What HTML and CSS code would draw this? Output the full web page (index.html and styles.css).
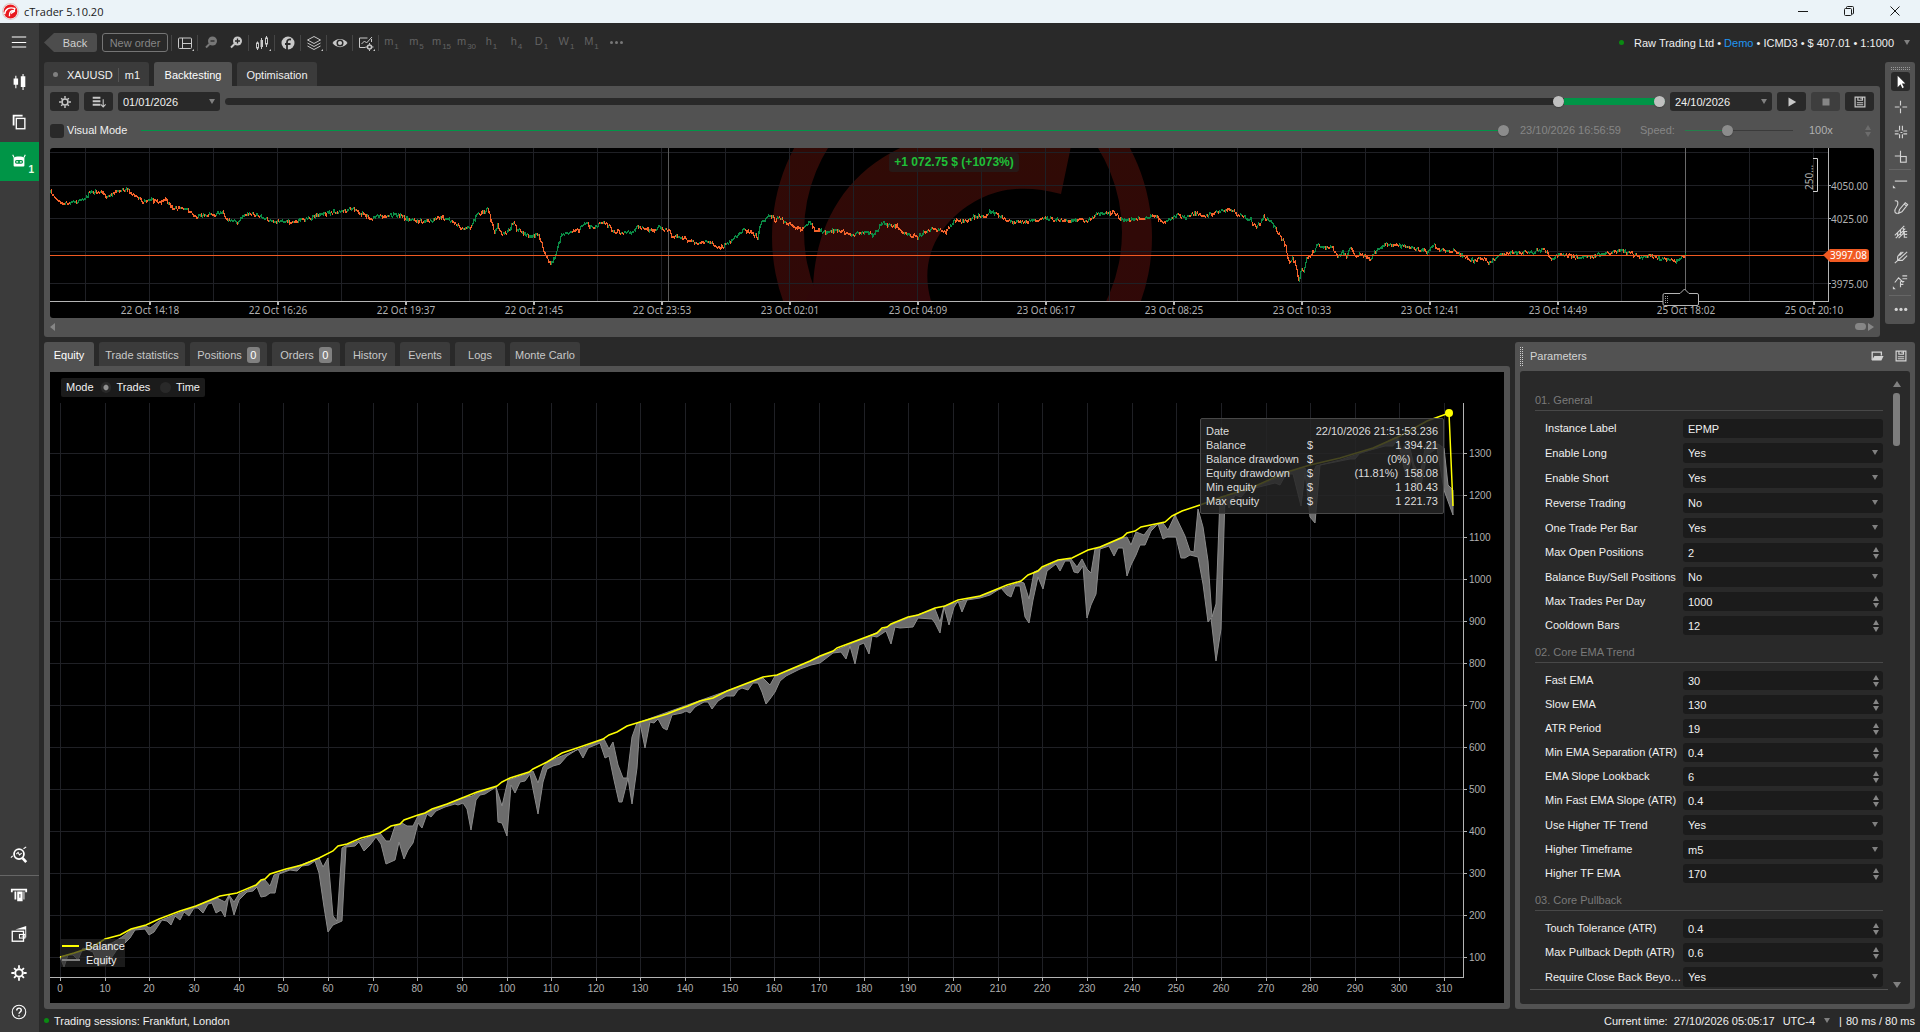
FILE: index.html
```html
<!DOCTYPE html>
<html lang="en">
<head>
<meta charset="utf-8">
<title>cTrader 5.10.20</title>
<link rel="stylesheet" href="styles.css">
</head>
<body>
<header class="titlebar">
  <svg class="logo" viewBox="0 0 16 16"><circle cx="8" cy="8" r="7.500" fill="#fff" stroke="#d9c9c9"/><circle cx="8" cy="8" r="6.500" fill="#e8191f"/><path d="M2.500 10.500C3 5.500 7 3.500 12 5.200L11.500 7.500C8.500 6.600 6.500 8.500 7 12.500" fill="none" stroke="#fff" stroke-width="1.300"/><path d="M8.500 10.500a2.500 2.500 0 0 1 4-2.500" fill="#fff"/></svg>
  <span class="title">cTrader 5.10.20</span>
  <button class="win" aria-label="Minimize"><svg viewBox="0 0 12 12"><path d="M1 6.500H11"/></svg></button>
  <button class="win" aria-label="Restore"><svg viewBox="0 0 12 12"><rect x="1.500" y="3.500" width="7" height="7" rx="1"/><path d="M3.500 3V2.500a1 1 0 0 1 1-1H9.500a1 1 0 0 1 1 1V8a1 1 0 0 1-1 1H9"/></svg></button>
  <button class="win" aria-label="Close"><svg viewBox="0 0 12 12"><path d="M1.500 1.500L10.500 10.500M10.500 1.500L1.500 10.500"/></svg></button>
</header>
<div class="app">
  <nav class="side">
    <button aria-label="Menu"><svg viewBox="0 0 20 20"><path d="M2 4.500H18M2 10.500H18M2 15.500H18"/></svg></button>
    <button aria-label="Trade"><svg viewBox="0 0 20 20"><path d="M6.500 3V17M14.500 1V19"/><path class="f" d="M4 6h5v7H4zM12 3.500h5v12h-5z"/></svg></button>
    <button aria-label="Copy"><svg viewBox="0 0 20 20"><path d="M4 14V3H14" stroke-width="2"/><rect x="7" y="6" width="9.500" height="11.500" stroke-width="1.500"/></svg></button>
    <button class="on" aria-label="Algo"><svg viewBox="0 0 20 20"><path class="f" d="M4 6.500C6 4.500 14 4.500 16 6.500V15a1 1 0 0 1-1 1H5a1 1 0 0 1-1-1z"/><path d="M4.500 6L3 3M15.500 6L17 3"/><rect x="5.500" y="9" width="9" height="4" rx="2" fill="#009547" stroke="none"/><path d="M7 11h2M11 11h2"/></svg><small>1</small></button>
    <span class="grow"></span>
    <button aria-label="Analyze"><svg viewBox="0 0 20 20"><circle cx="10" cy="9" r="5.500" stroke-width="2"/><path d="M14 13.500L18 18" stroke-width="3"/><path d="M7 9l2-2 1.500 3L13 8M1 13l2-2M15 3l3-2" stroke-width="1.200"/></svg></button>
    <hr>
    <button aria-label="Deposit"><svg viewBox="0 0 20 20"><path d="M2 7V4H18V7" stroke-width="2"/><path class="f" d="M5 6h2v9H5zM8 6h6v11H8zM15 6h1v9h-1z"/><path d="M10.500 9h1v4h-1z" fill="#3b3b3b" stroke="none"/></svg></button>
    <button aria-label="Wallet"><svg viewBox="0 0 20 20"><rect x="2.500" y="7" width="12.500" height="11" stroke-width="1.500"/><path class="f" d="M6 5L18 1V14h-1V5z"/><rect x="10.500" y="10.500" width="6" height="4"/><path d="M13 12.500h1"/></svg></button>
    <button aria-label="Settings"><svg viewBox="0 0 20 20"><use href="#gear"/></svg></button>
    <button aria-label="Help"><svg viewBox="0 0 20 20"><circle cx="10" cy="10" r="7.500"/><path d="M7.500 8.200C7.500 4.800 12.500 5 12.500 8c0 2-2.500 2-2.500 4M10 13.500v1.500" stroke-width="1.600"/></svg></button>
  </nav>
  <main class="main">
    <div class="toolbar">
      <button class="back">Back</button>
      <button class="neworder">New order</button>
      <button class="ic drop" aria-label="Layout"><svg viewBox="0 0 16 16"><rect x="1.500" y="3" width="13" height="10.500" rx="1"/><path d="M5.500 3v10.500M5.500 8.500h9"/></svg></button>
      <button class="ic dim" aria-label="Zoom out"><svg viewBox="0 0 16 16"><circle class="f" cx="9.500" cy="6" r="4.500"/><path d="M6.500 9L3 12.500" stroke-width="2"/><path d="M7.500 6h4" stroke="#292929" stroke-width="1.300"/></svg></button>
      <button class="ic nosep" aria-label="Zoom in"><svg viewBox="0 0 16 16"><circle class="f" cx="9.500" cy="6" r="4.500"/><path d="M6.500 9L3 12.500" stroke-width="2"/><path d="M7 6h5M9.500 3.500v5" stroke="#292929" stroke-width="1.300"/></svg></button>
      <button class="ic drop" aria-label="Chart type"><svg viewBox="0 0 16 16"><path d="M3.500 6.500v1.500M3.500 13v2M7.500 3v11M12.500 1v2M12.500 9v3"/><path class="f" d="M6.500 5h2.500v7h-2.500z"/><rect x="2.500" y="8" width="2" height="5"/><rect x="11.500" y="3" width="2" height="6"/></svg></button>
      <button class="ic" aria-label="Indicators"><svg viewBox="0 0 16 16"><circle class="f" cx="8" cy="8" r="6.500"/><path d="M7 15V7.500C7 5 8.500 4 11 4.500M5 9H10.500" stroke="#292929" stroke-width="1.800"/></svg></button>
      <button class="ic drop" aria-label="Objects"><svg viewBox="0 0 16 16"><path d="M8 1.500L14.500 5 8 8.500 1.500 5zM1.500 8L8 11.500 14.500 8M1.500 11L8 14.500 14.500 11"/></svg></button>
      <button class="ic" aria-label="Viewing options"><svg viewBox="0 0 16 16"><path class="f" d="M.5 8C4 2.500 12 2.500 15.500 8 12 13.500 4 13.500.5 8z"/><circle cx="8" cy="8" r="2.800" fill="#ccc" stroke="#292929" stroke-width="1.500"/></svg></button>
      <button class="ic drop" aria-label="Chart settings"><svg viewBox="0 0 16 16"><path d="M7.500 12.500H1.500V3h8M3.500 9l3-3 2 2 5.500-6M13.500 4v3"/><circle cx="11.500" cy="12" r="2" stroke-width="1.500"/><path d="M11.500 8v1.500M11.500 14.500V16M7.500 12H9M14 12h1.500"/></svg></button>
      <span class="tfs">
        <button>m<sub>1</sub></button><button>m<sub>5</sub></button><button>m<sub>15</sub></button><button>m<sub>30</sub></button><button>h<sub>1</sub></button><button>h<sub>4</sub></button><button>D<sub>1</sub></button><button>W<sub>1</sub></button><button>M<sub>1</sub></button><button class="more" aria-label="More"><i></i><i></i><i></i></button>
      </span>
      <span class="grow"></span>
      <span class="dot"></span>
      <span class="acct">Raw Trading Ltd • <a href="#">Demo</a> • ICMD3 • $ 407.01 • 1:1000</span>
      <i class="caret"></i>
    </div>
    <div class="upper">
      <section class="charts">
        <div class="tabs">
          <button class="tab sym"><i class="gdot"></i>XAUUSD<span>m1</span></button>
          <button class="tab w78 on">Backtesting</button>
          <button class="tab w80">Optimisation</button>
        </div>
        <div class="panel top">
          <div class="ctl">
            <button class="box" aria-label="Settings"><svg viewBox="0 0 20 20"><use href="#gear"/></svg></button>
            <button class="box" aria-label="Sort"><svg viewBox="0 0 20 20"><path d="M1 4h11M1 9h11M1 14h11" stroke-width="2.800"/><path d="M16 6v11M12.500 13.500l3.500 3.500 3.500-3.500"/></svg></button>
            <span class="sel date"><select aria-label="From"><option>01/01/2026</option></select></span>
            <span class="dual"><input type="range" aria-label="Range start" min="0" max="1000" value="929"><input type="range" aria-label="Range end" min="0" max="1000" value="1000"></span>
            <span class="sel date"><select aria-label="To"><option>24/10/2026</option></select></span>
            <button class="box" aria-label="Play"><svg viewBox="0 0 20 20"><path class="f" d="M5 3.500l11 6.500-11 6.500z"/></svg></button>
            <button class="box off" aria-label="Stop"><svg viewBox="0 0 20 20"><path class="f" d="M5 5h10v10H5z"/></svg></button>
            <button class="box" aria-label="Save"><svg viewBox="0 0 20 20"><use href="#disk"/></svg></button>
          </div>
          <div class="vis">
            <input type="checkbox" id="vm"><label for="vm">Visual Mode</label>
            <input class="prog" type="range" aria-label="Progress" min="0" max="100" value="100">
            <span class="stamp">23/10/2026 16:56:59</span>
            <label for="sp" class="muted">Speed:</label>
            <input id="sp" class="speed" type="range" min="0" max="100" value="38">
            <span class="spx">100x</span><i class="ud"></i>
          </div>
          <div class="pricebox">
            <svg id="price" viewBox="50 148 1824 170"></svg>
            <span class="pl">+1 072.75 $ (+1073%)</span>
          </div>
          <div class="hscroll"><i class="lt"></i><span class="grow"></span><i class="pill"></i><i class="rt"></i></div>
        </div>
      </section>
      <aside class="tools">
        <i class="grip"></i>
        <button class="on" aria-label="Pointer"><svg viewBox="0 0 20 20"><path class="f" d="M7 4v12l3-3 2 4 1.500-1-2-4h3.500z"/></svg></button>
        <button aria-label="Crosshair"><svg viewBox="0 0 20 20"><path d="M10 4v5M10 12v5M4 10.500h5M12 10.500h5"/></svg></button>
        <button aria-label="Synced crosshair"><svg viewBox="0 0 20 20"><path d="M9 4v5M9 13v4M12 4v5M12 13v4M4 9.500h4M13 9.500h4M4 12.500h4M13 12.500h4M10 11h2"/></svg></button>
        <button aria-label="Measure"><svg viewBox="0 0 20 20"><path d="M10 4v6M4 9.500h6"/><rect x="10" y="10" width="6" height="6"/></svg></button>
        <hr>
        <button aria-label="Line"><svg viewBox="0 0 20 20"><path d="M4 8.500h13"/><path class="f" d="M2 16v-3l3 3z"/></svg></button>
        <button aria-label="Pencil"><svg viewBox="0 0 20 20"><path d="M4 3C8 2 8 7 5.500 10S4 17 7 16M8 16l1-4 6-7 2.500 2-6 7.500zM14 6.500l2.500 2"/></svg></button>
        <button aria-label="Channels"><svg viewBox="0 0 20 20"><path d="M4 13L14 3M5 16L15 6M8 16l5-5M7 10v4M10 7v6M13 4v8M17 9h-3v6h3M14 12h3"/></svg></button>
        <button aria-label="Pitchfork"><svg viewBox="0 0 20 20"><path d="M4 16L17 4M7 9v4h5l5-5M7 9l4-5M9 8l4-4"/></svg></button>
        <button aria-label="Patterns"><svg viewBox="0 0 20 20"><path d="M4 10l4-5 5 5M12 3h5M12 6h5M10 15v-6M10 9h4M10 12h3"/><path class="f" d="M2 17v-3l3 3z"/></svg></button>
        <hr>
        <button aria-label="More"><svg viewBox="0 0 20 20"><g class="f"><circle cx="5.500" cy="11" r="1.700"/><circle cx="10.500" cy="11" r="1.700"/><circle cx="15.500" cy="11" r="1.700"/></g></svg></button>
      </aside>
    </div>
    <div class="lower">
      <section class="results">
        <div class="tabs dimtabs">
          <button class="tab w50 on">Equity</button><button class="tab w86">Trade statistics</button><button class="tab w77">Positions<b>0</b></button><button class="tab w68">Orders<b>0</b></button><button class="tab w50">History</button><button class="tab w50">Events</button><button class="tab w50">Logs</button><button class="tab w70">Monte Carlo</button>
        </div>
        <div class="panel bottom">
          <div class="equitybox">
            <svg id="equity" viewBox="50 372 1454 631" preserveAspectRatio="xMinYMin meet"></svg>
            <div class="mode"><span>Mode</span><input type="radio" name="mode" id="mt" checked><label for="mt">Trades</label><input type="radio" name="mode" id="mi"><label for="mi">Time</label></div>
            <div class="tip"><table>
              <tr><td>Date</td><td></td><td>22/10/2026 21:51:53.236</td></tr>
              <tr><td>Balance</td><td>$</td><td>1 394.21</td></tr>
              <tr><td>Balance drawdown</td><td>$</td><td>(0%)&nbsp; 0.00</td></tr>
              <tr><td>Equity drawdown</td><td>$</td><td>(11.81%)&nbsp; 158.08</td></tr>
              <tr><td>Min equity</td><td>$</td><td>1 180.43</td></tr>
              <tr><td>Max equity</td><td>$</td><td>1 221.73</td></tr>
            </table></div>
            <div class="legend"><span><i class="y"></i>Balance</span><span><i></i>Equity</span></div>
          </div>
        </div>
      </section>
      <aside class="params">
        <div class="phead"><i class="vgrip"></i><span>Parameters</span><span class="grow"></span>
          <button aria-label="Open"><svg viewBox="0 0 16 16"><path d="M2.500 12.500V3.500H13v4" stroke-width="1.500"/><path class="f" d="M5 8h10.500L13 13H2z"/></svg></button>
          <button aria-label="Save"><svg viewBox="0 0 20 20"><use href="#disk"/></svg></button></div>
        <div class="pbody"><form class="pform" id="params"></form>
          <div class="vscroll"><i class="up"></i><i class="thumb"></i><span class="grow"></span><i class="dn"></i></div></div>
      </aside>
    </div>
    <footer class="status"><span class="dot"></span><span>Trading sessions: Frankfurt, London</span><span class="grow"></span><span>Current time:&nbsp; 27/10/2026 05:05:17</span><span class="utc">UTC-4</span><i class="caret"></i><em>|</em><span>80 ms / 80 ms</span></footer>
  </main>
</div>
<svg width="0" height="0" class="defs"><defs>
  <g id="gear"><circle cx="10" cy="10" r="4.200" stroke-width="2.200"/><path d="M10 1.500V5M10 15v3.500M1.500 10H5M15 10h3.500M4.500 4.500l2 2M13.500 13.500l2 2M15.500 4.500l-2 2M4.500 15.500l2-2" stroke-width="2"/></g>
  <g id="disk"><path d="M3 3H17V17H3zM7 3v4.500h6.500V3" stroke-width="1.700"/><path d="M11.500 4v2M5.500 11h9M5.500 14h9" stroke-width="1.600"/></g>
</defs></svg>
<script src="app.js"></script>
</body>
</html>
```
FILE: styles.css
```css
* { box-sizing: border-box; }
body { margin: 0; min-height: 100vh; display: flex; flex-direction: column; background: #292929; color: #f0f0f0; font: 11px/14px "Liberation Sans", Arial, sans-serif; }
button, input, select { font: inherit; color: inherit; border: 0; background: none; margin: 0; padding: 0; border-radius: 0; }
button { display: flex; align-items: center; justify-content: center; }
select { appearance: none; width: 100%; height: 100%; outline: 0; }
svg { fill: none; stroke: currentColor; }
.f { fill: currentColor; stroke: none; }
.grow { flex: 1; }
.defs { position: absolute; }
hr { margin: 0; border: 0; border-top: 1px solid #666; width: 100%; }

.titlebar { display: flex; height: 23px; background: #ebf3f8; color: #1a1a1a; align-items: center; padding: 0 2px; }
.logo { width: 17px; height: 17px; stroke: none; }
.title { flex: 1; padding-left: 5px; font: 11px/16px "Open Sans", sans-serif; }
.win { width: 46px; height: 23px; }
.win svg { width: 12px; height: 12px; margin-bottom: 2px; }

.app { flex: 1; display: flex; min-height: 0; }
.side { width: 39px; background: #3b3b3b; display: flex; flex-direction: column; color: #fff; }
.side button { height: 39px; position: relative; padding: 0 1px 1px 0; }
.side button:nth-child(-n+2) { margin-bottom: 1px; }
.side svg { width: 18px; height: 18px; stroke-width: 1.200; }
.side .on { background: #009547; }
.side small { position: absolute; right: 5px; bottom: 5px; font-size: 10px; line-height: 12px; font-weight: bold; color: #e6ffe6; }

.main { flex: 1; min-width: 0; display: flex; flex-direction: column; padding: 0 5px; }
.toolbar { height: 39px; display: flex; align-items: center; }
.back { width: 53px; height: 19px; padding-left: 9px; color: #d0d0d0; background: #4d4d4d; border-radius: 0 3px 3px 0; clip-path: polygon(10px 0, 100% 0, 100% 100%, 10px 100%, 0 50%); }
.neworder { width: 66px; height: 19px; margin: 0 3px 0 5px; border: 1px solid #757575; border-radius: 3px; color: #858585; }
.ic { width: 26px; height: 16px; border-left: 1px solid #454545; color: #c8c8c8; position: relative; }
.ic svg { width: 16px; height: 16px; }
.ic.nosep { border: 0; width: 25px; }
.ic.dim { color: #777; }
.drop::after { content: ""; position: absolute; right: 3px; bottom: 0; border: 1px solid; border-top-color: transparent; border-left-color: transparent; }
.tfs { display: flex; border-left: 1px solid #454545; color: #626262; height: 16px; }
.tfs button { width: 25px; font-size: 11px; line-height: 12px; align-items: flex-start; }
.tfs sub { font-size: 8px; line-height: 8px; align-self: flex-end; margin-left: 1px; vertical-align: baseline; }
.tfs .more { align-items: center; gap: 2px; }
.more i { width: 3px; height: 3px; border-radius: 2px; background: #777; }
.dot { width: 5px; height: 5px; border-radius: 3px; background: #0a8a12; }
.acct { margin: 0 10px; }
.acct a { color: #2196f3; text-decoration: none; }
.caret, .sel::after { border: 3px solid transparent; border-top: 5px solid #808080; border-bottom: 0; width: 0; height: 0; }
.toolbar .caret { margin-right: 5px; }

.upper, .lower { display: flex; gap: 5px; align-items: flex-start; }
.charts, .results { flex: 1; min-width: 0; }
.tabs { display: flex; gap: 5px; height: 24px; }
.tab { height: 24px; background: #3b3b3b; border-radius: 3px 3px 0 0; white-space: nowrap; padding-top: 1px; }
.tab.on { background: #525252; color: #fff; }
.dimtabs .tab:not(.on) { color: #c8c8c8; }
.tab b { background: #808080; color: #fff; width: 13px; height: 16px; line-height: 16px; border-radius: 3px; margin-left: 5px; font-weight: normal; }
.w50 { width: 50px; } .w68 { width: 68px; } .w70 { width: 70px; } .w77 { width: 77px; } .w78 { width: 78px; } .w80 { width: 80px; } .w86 { width: 86px; }
.sym { width: 105px; }
.sym span { border-left: 1px solid #555; margin-left: 5px; padding-left: 6px; }
.gdot { width: 5px; height: 5px; border-radius: 3px; background: #808080; margin-right: 9px; }
.panel { background: #525252; padding: 6px; border-radius: 0 3px 3px 3px; }
.top { padding-bottom: 0; }
.ctl { display: flex; gap: 5px; height: 19px; }
.box { width: 29px; background: #292929; border-radius: 3px; color: #c8c8c8; }
.box svg { width: 14px; height: 14px; stroke-width: 1.500; }
.box.off { background: #3e3e3e; color: #868686; }
.sel { position: relative; display: block; background: #292929; border-radius: 3px; }
.sel::after { content: ""; position: absolute; right: 5px; top: 7px; }
.date { width: 102px; padding-left: 5px; }
input[type=range] { appearance: none; height: 11px; outline: 0; }
input[type=range]::-webkit-slider-thumb { appearance: none; width: 11px; height: 11px; border-radius: 6px; background: #8c8c8c; box-shadow: 0 1px 1px #3338; pointer-events: auto; }
.dual { flex: 1; position: relative; height: 7px; margin-top: 6px; border-radius: 4px; background: linear-gradient(to right, #292929 93%, #009547 93%); }
.dual input { position: absolute; left: 0; top: -2px; width: 100%; pointer-events: none; }
.dual input[type=range]::-webkit-slider-thumb { background: #c0c0c0; }
.vis { display: flex; align-items: center; height: 37px; padding-top: 2px; }
.vis label, .stamp, .spx { margin-bottom: 1px; }
.vis input[type=checkbox] { appearance: none; width: 14px; height: 14px; background: #292929; border-radius: 3px; margin-right: 3px; }
.prog { flex: 1; margin: 0 11px 0 14px; }
.prog::-webkit-slider-runnable-track { height: 11px; background: linear-gradient(transparent 5px, #009547 5px 6px, transparent 6px); }
.stamp { color: #868686; width: 120px; }
.muted { color: #868686; width: 45px; }
.speed { width: 108px; margin-right: 16px; }
.speed::-webkit-slider-runnable-track { height: 11px; background: linear-gradient(#525252 5px, transparent 5px 6px, #525252 6px), linear-gradient(to right, #23804a 38%, #3b3b3b 38%); }
.spx { color: #b0b0b0; width: 56px; }
.ud { width: 6px; height: 12px; display: flex; flex-direction: column; justify-content: space-between; margin-right: 3px; opacity: .5; }
.ud::before, .ud::after { content: ""; border: 3px solid transparent; border-bottom: 5px solid #868686; border-top: 0; }
.ud::after { border-bottom: 0; border-top: 5px solid #868686; }
.pricebox, .equitybox { position: relative; background: #000; }
.pricebox { border-radius: 3px; overflow: hidden; }
.pricebox svg { display: block; width: 100%; height: auto; }
svg text { stroke: none; fill: #b0b0b0; }
#price text { font: 10px "Noto Sans", sans-serif; }
.pl { position: absolute; left: 46%; top: 5px; height: 19px; width: 130px; font-size: 12px; line-height: 19px; border-radius: 3px; text-align: center; background: #251d1ccc; color: #1fc038; font-weight: bold; white-space: nowrap; }
.hscroll { height: 19px; display: flex; align-items: center; padding-bottom: 2px; }
.hscroll i { border: 4px solid transparent; }
.hscroll .lt { border-right: 5px solid #868686; border-left: 0; }
.hscroll .rt { border-left: 6px solid #868686; border-right: 0; }
.hscroll .pill { width: 11px; height: 7px; border: 0; border-radius: 4px; background: #868686; margin-right: 2px; }

.tools { width: 30px; background: #525252; border-radius: 3px; display: flex; flex-direction: column; align-items: center; padding: 5px 4px 6px; color: #d4d4d4; gap: 6px; }
.tools button { width: 19px; height: 19px; border-radius: 3px; }
.tools .on { background: #292929; color: #fff; }
.tools svg { width: 19px; height: 19px; stroke-width: 1.200; }
.tools hr { margin: -3px 0; }
.grip { width: 19px; height: 3px; margin-bottom: -4px; background: repeating-linear-gradient(to right, #999 0 1px, transparent 1px 2px) 0 0 / 100% 1px no-repeat, repeating-linear-gradient(to right, #999 0 1px, transparent 1px 2px) 0 2px / 100% 1px no-repeat; }

.lower { flex: 1; margin-top: 5px; align-items: stretch; }
.results { display: flex; flex-direction: column; }
.bottom { flex: 1; display: flex; }
.equitybox { flex: 1; overflow: hidden; }
.equitybox svg { position: absolute; inset: 0; width: 100%; height: 100%; }
#equity text { font-size: 10px; }
.mode { position: absolute; left: 11px; top: 6px; height: 19px; width: 144px; padding: 0 5px 1px; background: #1b1b1b; border-radius: 2px; display: flex; align-items: center; }
.mode span { width: 36px; }
.mode input { appearance: none; width: 11px; height: 11px; border-radius: 6px; background: #292929; margin-right: 5px; }
.mode input:checked { background: radial-gradient(#909090 0 2px, #292929 3px); }
.mode label + input { margin-left: 10px; }
.tip { position: absolute; right: 60px; top: 46px; width: 244px; height: 96px; padding: 5px; background: #262626d9; border: 1px solid #484848; border-radius: 2px; color: #dcdcdc; }
.tip table { width: 100%; border-spacing: 0; line-height: 14px; }
.tip td { padding: 0; white-space: nowrap; }
.tip td:first-child { width: 101px; }
.tip td:last-child { text-align: right; }
.legend { position: absolute; left: 11px; bottom: 36px; width: 64px; height: 28px; background: #292929aa; }
.legend span { display: flex; align-items: center; height: 14px; }
.legend i { width: 18px; height: 2px; margin: 0 6px 0 1px; background: #808080; }
.legend .y { background: #ff0; }

.params { width: 400px; background: #525252; border-radius: 3px; display: flex; flex-direction: column; padding: 0 5px 5px; }
.phead { display: flex; align-items: center; height: 29px; color: #d4d4d4; padding-bottom: 1px; }
.phead button { width: 16px; height: 16px; margin-left: 8px; }
.phead svg { width: 14px; height: 14px; }
.phead button + button { margin-right: 1px; }
.vgrip { width: 3px; height: 19px; margin-right: 7px; background: repeating-linear-gradient(#ccc 0 1px, transparent 1px 2px) 0 0 / 1px 100% no-repeat, repeating-linear-gradient(#ccc 0 1px, transparent 1px 2px) 2px 0 / 1px 100% no-repeat; }
.pbody { flex: 1; background: #292929; border-radius: 3px; display: flex; align-items: flex-start; padding: 12px 10px 13px 10px; }
.pform { width: 358px; padding: 0 5px; border-bottom: 1px solid #525252; }
.pform h3 { margin: 0 0 8px; height: 28px; padding-top: 10px; border-bottom: 1px solid #484848; font-size: 11px; font-weight: normal; color: #7a7a7a; }
.row { display: flex; align-items: center; padding-left: 10px; margin-bottom: 5px; height: 19px; }
.row.tall { height: 20px; }
.row:last-child { margin-bottom: 2px; }
.row label { width: 136px; height: 14px; margin: 0 2px 1px 0; white-space: nowrap; }
.row .fld { flex: 1; height: 100%; background: #1b1b1b; border-radius: 3px; padding-left: 5px; display: flex; align-items: center; position: relative; }
.fld input { width: 100%; height: 100%; outline: 0; }
.fld .ud { opacity: 1; margin-right: 4px; flex: none; }
.row + h3 { margin-top: -5px; }
.vscroll { margin-left: auto; align-self: stretch; width: 7px; display: flex; flex-direction: column; align-items: center; }
.vscroll i { flex: none; }
.up { border: 4px solid transparent; border-bottom: 6px solid #808080; border-top: 0; margin: -2px -1px 6px; }
.dn { border: 4px solid transparent; border-top: 6px solid #808080; border-bottom: 0; margin-bottom: 3px; }
.thumb { width: 7px; height: 53px; border-radius: 3px; background: #7d7d7d; }
.status { height: 23px; display: flex; align-items: center; }
.status .dot { margin: 0 5px 0 0; }
.utc { margin: 0 9px 0 8px; }
.status em { font-style: normal; margin: 0 4px 0 9px; }
```
FILE: app.js
```js
// ---- parameter form -------------------------------------------------
const groups = [
  ['01. General', [['Instance Label', 'EPMP', 't'], ['Enable Long', 'Yes', 's'], ['Enable Short', 'Yes', 's'], ['Reverse Trading', 'No', 's'], ['One Trade Per Bar', 'Yes', 's'], ['Max Open Positions', '2', 'n'], ['Balance Buy/Sell Positions', 'No', 's'], ['Max Trades Per Day', '1000', 'n'], ['Cooldown Bars', '12', 'n']]],
  ['02. Core EMA Trend', [['Fast EMA', '30', 'n'], ['Slow EMA', '130', 'n'], ['ATR Period', '19', 'n'], ['Min EMA Separation (ATR)', '0.4', 'n'], ['EMA Slope Lookback', '6', 'n'], ['Min Fast EMA Slope (ATR)', '0.4', 'n'], ['Use Higher TF Trend', 'Yes', 's'], ['Higher Timeframe', 'm5', 'p'], ['Higher TF EMA', '170', 'n']]],
  ['03. Core Pullback', [['Touch Tolerance (ATR)', '0.4', 'n'], ['Max Pullback Depth (ATR)', '0.6', 'n'], ['Require Close Back Beyo…', 'Yes', 's']]]
];
let id = 0;
document.getElementById('params').innerHTML = groups.map(([title, rows]) =>
  `<h3>${title}</h3>` + rows.map(([label, value, kind]) => {
    const key = 'p' + id++;
    const menu = kind === 's' || kind === 'p';
    const field = menu
      ? `<span class="fld sel"><select id="${key}"><option>${value}</option></select></span>`
      : `<span class="fld"><input type="text" id="${key}" value="${value}">${kind === 'n' ? '<i class="ud"></i>' : ''}</span>`;
    return `<div class="row${kind === 's' ? ' tall' : ''}"><label for="${key}">${label}</label>${field}</div>`;
  }).join('')).join('');

// ---- helpers --------------------------------------------------------
const line = (x1, y1, x2, y2, c, w = 1) => `<path d="M${x1} ${y1}L${x2} ${y2}" stroke="${c}" stroke-width="${w}"/>`;
const pairs = s => s.trim().split(/\s+/).map(p => p.split(',').map(Number));
const at = (pts, x) => {
  let i = 1;
  while (i < pts.length - 1 && pts[i][0] < x) i++;
  const [a, b] = [pts[i - 1], pts[i]];
  return a[1] + (b[1] - a[1]) * (x - a[0]) / (b[0] - a[0]);
};

// ---- price chart ----------------------------------------------------
const track = pairs(`50,192 56,198 61,203 70,203 80,200 86,197 90,191 100,192 108,196 117,190 127,189 132,194 142,202 150,199 158,202 165,200 172,208 186,208 193,216 205,215 215,214 221,211 227,220 237,222 244,214 252,213 262,217 270,221 290,222 305,219 317,215 330,212 345,211 352,208 362,214 372,218 390,214 400,216 412,220 430,221 440,217 450,220 460,227 470,228 475,216 482,212 487,209 491,222 494,231 497,224 502,235 508,230 513,221 516,229 530,236 538,233 543,250 550,264 555,255 560,236 570,231 578,230 585,222 592,228 603,221 612,231 630,233 637,226 645,228 651,231 657,227 668,230 672,236 680,237
695,242 708,242 718,248 728,243 735,236 742,230 750,231 757,237 760,223 764,219 770,214 774,220 778,218 788,224 800,229 808,222 814,228 825,232 838,230 850,234 866,232 872,235 881,223 892,226 896,225 900,232 916,237 922,233 931,228 945,232 953,221 966,220 975,216 983,216 989,211 998,215 1010,221 1030,221 1045,218 1065,221 1078,219 1086,221 1098,213 1114,212 1120,220 1140,219 1155,215 1162,222 1175,215 1185,217 1195,212 1205,216 1215,212 1228,209 1238,214 1250,219 1256,228 1263,217 1270,220 1278,234 1284,243 1288,262 1292,258 1295,265 1298,281 1301,268 1303,272 1306,258 1313,252 1317,244 1325,248 1331,247 1337,257 1342,251 1346,257 1350,246 1354,255 1362,254 1370,258 1376,250 1385,244 1400,246 1415,248 1427,252 1432,244 1440,250 1453,250 1463,256 1473,260 1482,257 1488,262 1500,254 1515,252 1530,252 1543,249 1550,258 1560,254 1578,257 1595,255 1610,252 1622,250 1640,257 1650,255 1660,258 1675,261 1685,254`);
let out = `<defs><clipPath id="plot"><path d="M50 148H1828V301H50z"/></clipPath><linearGradient id="wm" x1="0" y1="0" x2="0" y2="1"><stop offset="0" stop-color="#300b05"/><stop offset="1" stop-color="#300709"/></linearGradient></defs>
<g clip-path="url(#plot)" fill="url(#wm)" stroke="none"><path fill-rule="evenodd" d="M772 237a190 190 0 1 0 380 0a190 190 0 1 0-380 0M804 232a159 159 0 1 1 318 0a159 159 0 1 1-318 0"/>
<path d="M813 288C815 225 846 165 920 140H1072L1070 151 1061 194C1010 180 975 195 949 222C930 243 922 270 931 301H805L812 288z"/></g>`;
for (let x = 85.5; x < 1828; x += 64) out += line(x, 148, x, 301, '#1f2025');
for (const y of [152.5, 185.5, 218.5, 251.5, 283.5]) out += line(50, y, 1828, y, '#1f2025');
out += line(668.5, 148, 668.5, 301, '#5a5a5a') + line(1685.5, 148, 1685.5, 290, '#6a6a6a');
let seed = 7, prev = 192, up = false;
const rnd = () => (seed = (seed * 16807) % 2147483647) / 2147483647;
for (let x = 50; x < 1686; x++) {
  const y = Math.round(at(track, x) + (rnd() - .5) * 3.4);
  if (y !== prev && rnd() > .3) up = y < prev;
  const h = Math.max(2, Math.abs(y - prev) + (rnd() > .7 ? 2 : 1));
  out += `<rect x="${x}" y="${Math.min(y, prev) - (rnd() > .7 ? 1 : 0)}" width="1" height="${h}" fill="${up ? '#0b8a45' : '#f4632b'}" stroke="none"/>`;
  prev = y;
}
out += line(50, 255.5, 1828, 255.5, '#f15a22') + line(50, 301.5, 1829, 301.5, '#b4b4b4') + line(1828.5, 148, 1828.5, 302, '#b4b4b4');
['22 Oct 14:18', '22 Oct 16:26', '22 Oct 19:37', '22 Oct 21:45', '22 Oct 23:53', '23 Oct 02:01', '23 Oct 04:09', '23 Oct 06:17', '23 Oct 08:25', '23 Oct 10:33', '23 Oct 12:41', '23 Oct 14:49', '25 Oct 18:02', '25 Oct 20:10'].forEach((t, i) => {
  const x = 150 + 128 * i;
  out += line(x, 301, x, 305, '#b4b4b4', 2) + `<text x="${x}" y="314" text-anchor="middle">${t}</text>`;
});
[['4050.00', 186], ['4025.00', 219], ['3975.00', 284]].forEach(([t, y]) => out += line(1829, y - .5, 1831, y - .5, '#b4b4b4') + `<text x="1831" y="${y + 4}">${t}</text>`);
out += `<path d="M1823 255L1830 249H1866a3 3 0 0 1 3 3V259a3 3 0 0 1-3 3H1830z" fill="#f15a22" stroke="none"/><text x="1830" y="259" style="fill:#fff">3997.08</text>
<path d="M1663 295a1.500 1.500 0 0 1 1.500-1.500H1680L1684.500 289 1689 293.500H1697a1.500 1.500 0 0 1 1.500 1.500V304a1.500 1.500 0 0 1-1.500 1.500H1664.500a1.500 1.500 0 0 1-1.500-1.500z" fill="#000" stroke="#b4b4b4"/><path d="M1665.500 296v7M1667.500 296v7" stroke="#999" stroke-dasharray="1 1"/>
<path d="M1813 158.500H1817.500V191.500H1813" stroke="#d0d0d0"/><text transform="translate(1813 190) rotate(-90)">250…</text>`;
document.getElementById('price').innerHTML = out;

// ---- equity chart ---------------------------------------------------
const balance = `60,957 74,953 92,947 105,939 120,935 131,929 146,925 159,919 180,911 196,906 220,896 237,893 256,885 261,880 265,879 270,874 286,869 302,865 319,858 333,851 338,846 347,844 361,838 380,833 391,826 400,824 404,820 418,815 425,813 432,809 447,804 462,798 477,792 497,786 502,782 510,778 529,772 533,769 547,762 562,753 580,747 603,739 609,735 617,732 627,726 640,722 667,714 677,710 688,706 700,701 713,698 727,691 763,677 777,675 810,661 820,656 833,651 837,648 877,633 882,628 887,627 891,624 908,617 918,615 935,608 945,606 958,600 980,596 1007,585 1021,581 1028,575 1038,571 1042,567 1058,560 1072,558 1088,550 1100,547 1123,537 1127,533 1135,531 1141,527 1165,522 1172,516 1182,511 1200,505 1222,497 1253,487 1287,472 1310,465 1340,458 1373,448 1400,436 1427,421 1449,413 1453,506`;
const high = `60,957 75,953 92,948 105,945 112,943 122,937 131,930 146,926 150,928 159,921 196,906 217,898 225,902 229,895 234,902 239,894 256,886 261,881 265,880 270,886 274,875 319,858 323,867 328,858 333,916 337,921 342,848 347,845 380,833 386,841 390,841 395,826 402,823 407,826 413,826 418,816 462,798 472,796 477,793 496,787 502,806 508,780 529,773 533,771 538,783 543,767 547,762 604,739 609,749 613,742 618,765 623,778 627,778 632,737 637,723 640,722 763,678 770,685 775,676 811,661 820,657 876,633 891,625 908,618 935,609 940,622 944,606 980,596 1006,587 1021,582 1024,583 1029,599 1034,572 1043,568 1058,561 1071,559 1077,567 1082,559 1087,569 1091,573 1095,549 1110,543 1123,538 1127,537 1131,545 1136,532 1144,535 1150,527 1163,523 1168,530 1175,515 1185,536 1190,551 1194,552 1198,509 1203,527 1208,561 1212,617 1216,604 1220,497 1253,488 1286,474 1300,468 1305,468 1310,480 1316,466 1340,460 1373,449 1396,437 1402,450 1408,440 1414,465 1420,475 1426,444 1438,444 1444,448 1448,485 1453,490`;
const low = `60,957 64,967 68,955 73,955 78,960 83,948 93,952 98,965 106,965 112,957 120,945 125,943 130,938 135,930 145,929 149,935 154,932 162,920 167,921 171,925 175,916 180,920 184,912 189,916 194,908 198,908 203,913 208,904 212,903 216,913 221,910 225,917 229,895 234,915 239,900 247,892 253,891 257,887 261,897 266,896 270,893 275,893 279,874 290,870 297,871 302,866 309,865 315,861 319,873 324,907 328,932 333,925 342,921 346,847 355,846 359,842 364,851 370,845 376,837 381,844 386,864 395,860 399,842 404,859 408,850 413,843 418,823 422,828 427,814 431,817 436,811 445,807 455,804 458,805 463,803 467,809 471,830 476,800 480,795 485,794 496,787 498,822 502,823 507,836 511,785 515,793 520,782 525,781 530,774 538,814 543,782 547,769 553,766 560,764 567,756 578,749 583,758 588,748 600,743 605,758 609,756 614,780 619,802 622,802 628,778 632,804 637,768 640,723 645,748 650,722 654,723 658,719 663,728 667,730 672,715 682,713 686,711 690,713 695,707 704,702 708,702 712,709 718,701 726,696 734,696 738,690 742,688 748,690 753,683 758,683 762,692 766,704 770,699 775,692 780,681 786,676 800,669 811,665 820,663 833,653 841,652 846,659 850,646 855,664 859,645 864,643 869,654 872,636 877,637 886,631 891,644 895,627 900,628 913,627 918,618 932,619 935,623 940,633 944,607 949,625 954,607 958,601 962,612 967,600 980,598 990,595 1001,588 1007,595 1011,597 1015,586 1020,586 1025,617 1029,623 1033,600 1038,577 1043,589 1047,571 1056,564 1060,571 1065,561 1070,561 1074,572 1078,573 1083,566 1087,618 1091,605 1096,594 1100,549 1109,546 1114,556 1118,548 1123,548 1127,576 1131,565 1136,555 1140,545 1145,545 1151,531 1158,524 1163,539 1167,537 1176,537 1181,558 1185,558 1190,555 1198,557 1203,584 1208,622 1211,618 1216,661 1221,629 1225,497 1229,508 1235,495 1241,497 1247,490 1275,483 1280,485 1286,474 1293,474 1301,506 1305,473 1310,517 1315,523 1320,465 1350,459 1355,459 1360,453 1385,446 1393,446 1398,438 1402,460 1406,475 1412,460 1416,485 1420,490 1427,455 1437,448 1444,490 1453,515`;
let eq = '';
for (let n = 0; n <= 310; n += 10) {
  const x = Math.round(60.1 + n * 4.4645) + .5;
  eq += line(x, 403, x, 977, '#1f2025') + line(x, 977, x, 981, '#b4b4b4') + `<text x="${x - .5}" y="992" text-anchor="middle">${n}</text>`;
}
for (let v = 100; v <= 1300; v += 100) {
  const y = 999.5 - v * .42;
  eq += line(50, y, 1463, y, '#1f2025') + line(1463, y, 1467, y, '#b4b4b4') + `<text x="1469" y="${y + 3.5}">${v}</text>`;
}
eq += `<polygon points="${high} ${pairs(low).reverse().join(' ')}" fill="#6c6c6c" stroke="#8a8a8a"/>
<polyline points="${balance}" stroke="#ffff00" stroke-width="1.500"/><circle cx="1449" cy="413" r="4" fill="#ff0" stroke="none"/>`;
eq += line(50, 977.5, 1463, 977.5, '#b4b4b4') + line(1463.5, 403, 1463.5, 978, '#b4b4b4');
document.getElementById('equity').innerHTML = eq;
```
